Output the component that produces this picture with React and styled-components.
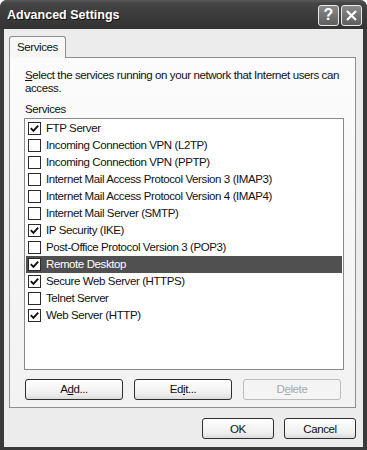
import React from "react";
import styled, { createGlobalStyle } from "styled-components";

const Global = createGlobalStyle`
  html, body { margin: 0; padding: 0; background: #ffffff; }
  body { font-family: "Liberation Sans", Arial, sans-serif; }
  * { box-sizing: border-box; }
`;

const Window = styled.div`
  width: 367px;
  height: 450px;
  display: flex;
  flex-direction: column;
  background: #3a3a3a;
  border-radius: 7px 7px 0 0;
  overflow: hidden;
`;

const TitleBar = styled.div`
  height: 29px;
  flex: none;
  display: flex;
  align-items: center;
  padding: 0 5px 0 7px;
  background: linear-gradient(#5a5a5a 0%, #444 12%, #3a3a3a 60%, #333 100%);
`;

const Title = styled.div`
  flex: 1;
  color: #ffffff;
  font-family: "Liberation Sans", Arial, sans-serif;
  font-weight: bold;
  font-size: 12.5px;
  text-shadow: 1px 1px 0 #111;
  padding-top: 1px;
`;

const CaptionButtons = styled.div`
  display: flex;
  gap: 2px;
  margin-top: 1px;
`;

const CaptionButton = styled.div`
  width: 21px;
  height: 21px;
  border: 1px solid #e8e8e8;
  border-radius: 3px;
  background: linear-gradient(#8a8a8a, #5e5e5e);
  display: flex;
  align-items: center;
  justify-content: center;
  color: #fff;
  font-family: "Liberation Sans", sans-serif;
  font-weight: bold;
  font-size: 16px;
  line-height: 1;
`;

const Body = styled.div`
  flex: 1;
  margin: 0 4px 3px 4px;
  background: #ececec;
  display: flex;
  flex-direction: column;
  padding: 7px 7px 0 5px;
  font-size: 11.5px;
  letter-spacing: -0.4px;
  color: #111;
`;

const Tabs = styled.div`
  display: flex;
  height: 21px;
  position: relative;
  z-index: 1;
`;

const Tab = styled.div`
  width: 57px;
  height: 22px;
  border: 1px solid #8e8e8e;
  border-bottom: none;
  border-radius: 3px 3px 0 0;
  background: #f7f7f7;
  padding: 4px 0 0 7px;
`;

const Panel = styled.div`
  height: 351px;
  border: 1px solid #8e8e8e;
  background: linear-gradient(#fbfbfb, #f2f2f2);
  padding: 11px 11px 0 14px;
  display: flex;
  flex-direction: column;
`;

const Text = styled.div`
  line-height: 12.5px;
  padding-left: 1px;
  white-space: nowrap;
`;

const Label = styled(Text)`
  margin-top: 9px;
`;

const ListBox = styled.div`
  margin-top: 2px;
  height: 252px;
  border: 1px solid #8a8a8a;
  background: #fff;
  padding: 1px 1px 0;
  display: flex;
  flex-direction: column;
`;

const Row = styled.div`
  height: 17px;
  display: flex;
  align-items: center;
  gap: 5px;
  padding-left: 2px;
  background: ${(p) => (p.$selected ? "#505050" : "transparent")};
  color: ${(p) => (p.$selected ? "#ffffff" : "#111111")};
`;

const Box = styled.div`
  width: 13px;
  height: 13px;
  border: 1px solid #2a2a2a;
  background: #fff;
  display: flex;
  align-items: center;
  justify-content: center;
  flex: none;
`;

const ButtonRow = styled.div`
  display: flex;
  gap: 11px;
  margin-top: 9px;
  padding-left: 1px;
`;

const Button = styled.div`
  width: ${(p) => p.$w || 98}px;
  height: 21px;
  border: 1px solid ${(p) => (p.$disabled ? "#bdbdbd" : "#2e2e2e")};
  border-radius: 3px;
  background: ${(p) =>
    p.$disabled ? "#f4f4f4" : "linear-gradient(#ffffff, #f0f0f0 70%, #dcdcdc)"};
  color: ${(p) => (p.$disabled ? "#a8a8a8" : "#111")};
  display: flex;
  align-items: center;
  justify-content: center;
`;

const Footer = styled.div`
  display: flex;
  justify-content: flex-end;
  gap: 10px;
  margin-top: 10px;
`;

const U = styled.span`
  text-decoration: underline;
`;

const Check = () => (
  <svg width="9" height="9" viewBox="0 0 9 9">
    <path d="M0.8 4.2 L3.4 6.8 L8.2 1.6" fill="none" stroke="#111" strokeWidth="1.9" />
  </svg>
);

const items = [
  ["FTP Server", true],
  ["Incoming Connection VPN (L2TP)", false],
  ["Incoming Connection VPN (PPTP)", false],
  ["Internet Mail Access Protocol Version 3 (IMAP3)", false],
  ["Internet Mail Access Protocol Version 4 (IMAP4)", false],
  ["Internet Mail Server (SMTP)", false],
  ["IP Security (IKE)", true],
  ["Post-Office Protocol Version 3 (POP3)", false],
  ["Remote Desktop", true, true],
  ["Secure Web Server (HTTPS)", true],
  ["Telnet Server", false],
  ["Web Server (HTTP)", true],
];

export default function App() {
  return (
    <>
      <Global />
      <Window>
        <TitleBar>
          <Title>Advanced Settings</Title>
          <CaptionButtons>
            <CaptionButton>?</CaptionButton>
            <CaptionButton>
              <svg width="13" height="13" viewBox="0 0 13 13">
                <path d="M2 2 L11 11 M11 2 L2 11" stroke="#fff" strokeWidth="2.2" />
              </svg>
            </CaptionButton>
          </CaptionButtons>
        </TitleBar>
        <Body>
          <Tabs>
            <Tab>Services</Tab>
          </Tabs>
          <Panel>
            <Text>
              <U>S</U>elect the services running on your network that Internet users can
              <br />
              access.
            </Text>
            <Label>Services</Label>
            <ListBox>
              {items.map(([name, checked, sel]) => (
                <Row key={name} $selected={sel}>
                  <Box>{checked && <Check />}</Box>
                  <span>{name}</span>
                </Row>
              ))}
            </ListBox>
            <ButtonRow>
              <Button>
                A<U>d</U>d...
              </Button>
              <Button>
                Ed<U>i</U>t...
              </Button>
              <Button $disabled>
                D<U>e</U>lete
              </Button>
            </ButtonRow>
          </Panel>
          <Footer>
            <Button $w={72}>OK</Button>
            <Button $w={72}>Cancel</Button>
          </Footer>
        </Body>
      </Window>
    </>
  );
}
